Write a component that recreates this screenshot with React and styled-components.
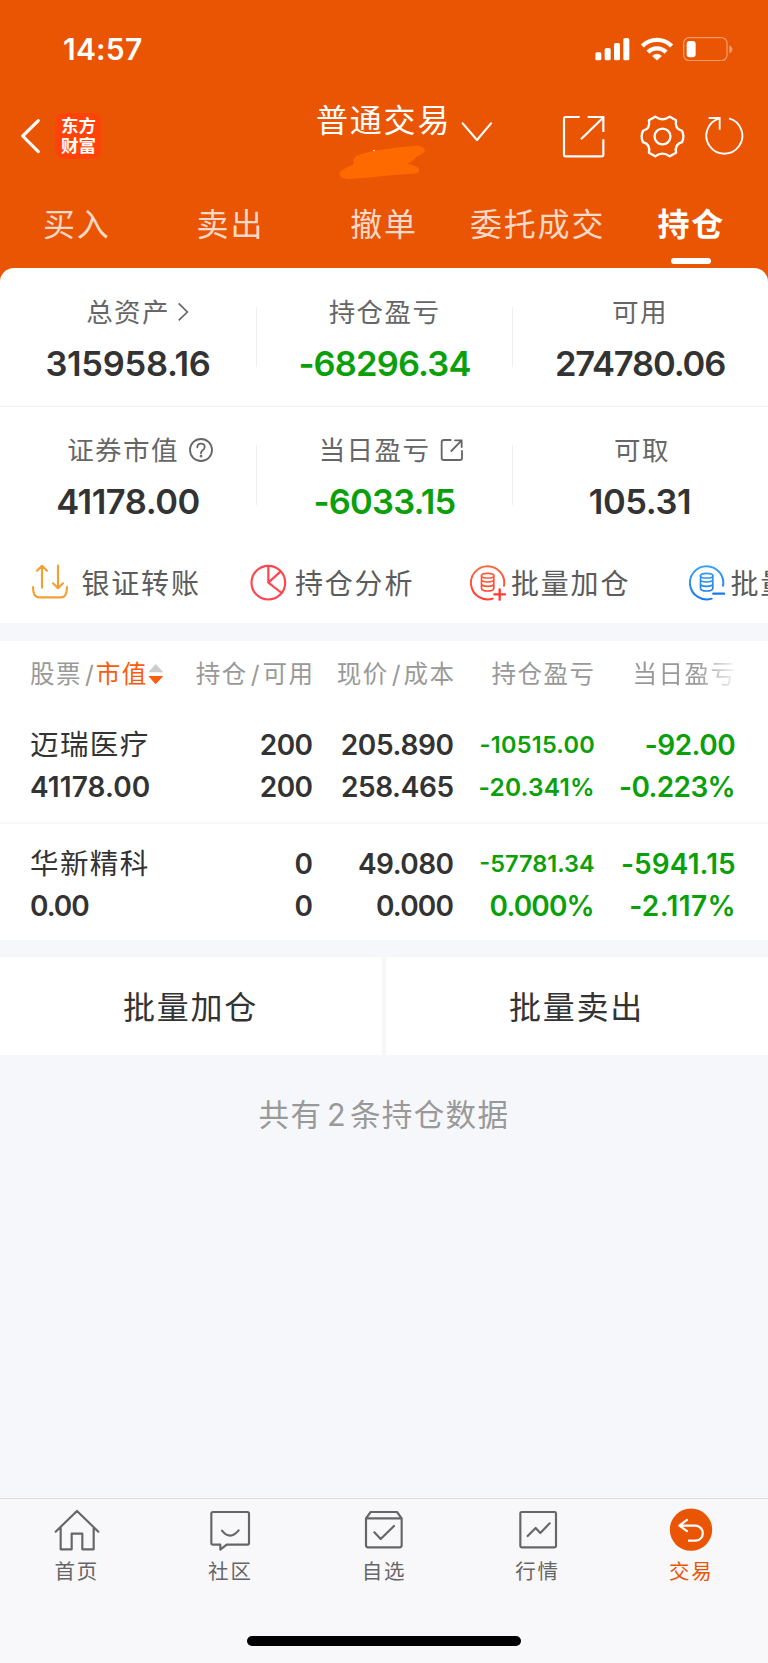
import React from "react";
import styled, { createGlobalStyle } from "styled-components";

const ORANGE = "#ea5504";
const GREEN = "#0aa00a";
const INK = "#333333";
const GREY = "#666666";
const MUTED = "#999999";
const CANVAS = "#f6f7fa";

const GlobalStyle = createGlobalStyle`
  * { box-sizing: border-box; }
  body {
    margin: 0;
    background: ${CANVAS};
    font-family: Inter, "Noto Sans CJK SC", sans-serif;
    color: ${INK};
  }
  svg { display: block; flex: none; }
`;

const Screen = styled.div`
  width: 768px;
  height: 1663px;
  display: flex;
  flex-direction: column;
  overflow: hidden;
  background: ${CANVAS};
`;

const Header = styled.header`
  height: 282px;
  flex: none;
  background: ${ORANGE};
  color: #fff;
`;

const StatusBar = styled.div`
  height: 98px;
  display: flex;
  align-items: center;
  padding: 0 35px 0 63px;
`;

const Clock = styled.span`
  flex: 1;
  font-size: 30px;
  font-weight: 600;
  line-height: 36px;
  letter-spacing: 0.2px;
`;

const StatusIcons = styled.div`
  display: flex;
  align-items: center;
  gap: 10.5px;
`;

const NavBar = styled.div`
  height: 76px;
  display: flex;
  align-items: center;
  padding: 0 23px 0 20px;
`;

const Logo = styled.div`
  width: 46px;
  height: 46px;
  margin-left: 14px;
  padding: 3px 0 0 1px;
  border-radius: 9px;
  background: #ff4208;
  font-size: 17.5px;
  font-weight: 700;
  line-height: 20px;
  text-align: center;
`;

const TitleBlock = styled.div`
  position: relative;
  margin-left: 215px;
  height: 76px;
  display: flex;
`;

const Title = styled.h1`
  margin: 0;
  font-size: 32px;
  font-weight: 400;
  line-height: 45px;
  letter-spacing: 1.8px;
  white-space: nowrap;
`;

const Scribble = styled.svg`
  position: absolute;
  left: 23px;
  top: 47px;
`;

const NavIcons = styled.div`
  display: flex;
  align-items: center;
  margin-left: auto;
`;

const Tabs = styled.nav`
  height: 94px;
  display: grid;
  grid-template-columns: repeat(5, 1fr);
`;

const Tab = styled.div`
  display: flex;
  flex-direction: column;
  align-items: center;
  padding-top: 28px;
  font-size: 32px;
  line-height: 46px;
  letter-spacing: 1.8px;
  white-space: nowrap;
  font-weight: ${(p) => (p.$active ? 700 : 400)};
  color: ${(p) => (p.$active ? "#fff" : "rgba(255,255,255,0.78)")};
  &::after {
    content: "";
    width: 40px;
    height: 6px;
    margin-top: 10px;
    border-radius: 3px;
    background: ${(p) => (p.$active ? "#fff" : "transparent")};
  }
`;

const Summary = styled.section`
  height: 355px;
  flex: none;
  margin-top: -14px;
  border-radius: 14px 14px 0 0;
  background: #fff;
  overflow: hidden;
`;

const MetricRow = styled.div`
  height: ${(p) => p.$height}px;
  display: grid;
  grid-template-columns: 257px 256px 255px;
  border-bottom: ${(p) => (p.$line ? "1px solid #f1f1f1" : "none")};
`;

const Metric = styled.div`
  display: flex;
  flex-direction: column;
  align-items: center;
  padding: 25px 1px 0 0;
  background: ${(p) =>
    p.$last ? "none" : "linear-gradient(#f0f0f0, #f0f0f0) right 39px / 1px 60px no-repeat"};
  ${MetricRow} + ${MetricRow} & {
    padding-top: 24px;
    background-position: right 38px;
  }
`;

const MetricLabel = styled.div`
  display: flex;
  align-items: center;
  gap: ${(p) => p.$gap || 0}px;
  padding-left: ${(p) => p.$shift || 0}px;
  font-size: 26.5px;
  font-weight: 400;
  line-height: 38px;
  letter-spacing: 1.4px;
  color: ${GREY};
`;

const MetricValue = styled.div`
  margin-top: ${(p) => (p.$down ? 11.5 : 12)}px;
  font-size: 34.5px;
  font-weight: 600;
  line-height: 42px;
  letter-spacing: ${(p) => p.$spacing || 0}px;
  color: ${(p) => (p.$down ? GREEN : INK)};
`;

const Actions = styled.div`
  display: flex;
  height: 78px;
  padding-left: 30.5px;
  overflow: hidden;
`;

const Action = styled.div`
  width: 219.5px;
  flex: none;
  display: flex;
  align-items: center;
  gap: ${(p) => p.$gap}px;
  font-size: 28px;
  font-weight: 400;
  letter-spacing: 1.8px;
  white-space: nowrap;
  color: #5c5c5c;
`;

const Holdings = styled.section`
  height: 299px;
  flex: none;
  margin-top: 18px;
  background: #fff;
`;

const Row = styled.div`
  display: grid;
  grid-template-columns: 142px 141px 141px 140px 141px;
  padding: 0 33px 0 30px;
`;

const HeadRow = styled(Row)`
  height: 63px;
  padding-top: 14px;
  align-items: start;
  font-size: 24.5px;
  font-weight: 400;
  line-height: 38px;
  letter-spacing: 1.5px;
  color: ${MUTED};
  white-space: nowrap;
`;

const HeadCell = styled.div`
  display: flex;
  align-items: center;
  justify-content: ${(p) => (p.$left ? "flex-start" : "flex-end")};
  margin-right: -1.5px;
  ${(p) =>
    p.$fade &&
    `-webkit-mask-image: linear-gradient(90deg, #000 72%, rgba(0,0,0,0.15) 98%);
     mask-image: linear-gradient(90deg, #000 72%, rgba(0,0,0,0.15) 98%);`}
`;

const Slash = styled.span`
  margin: 0 1.5px 0 3px;
`;

const Sorted = styled.span`
  margin-left: -1px;
  color: #ff5a0a;
`;

const StockRow = styled(Row)`
  height: ${(p) => p.$height}px;
  padding-top: ${(p) => p.$top}px;
  border-bottom: ${(p) => (p.$line ? "2px solid #f8f8f9" : "none")};
`;

const Cell = styled.div`
  display: flex;
  flex-direction: column;
  align-items: ${(p) => (p.$left ? "flex-start" : "flex-end")};
  white-space: nowrap;
`;

const Name = styled.div`
  font-size: 28.5px;
  font-weight: 400;
  line-height: 42px;
  letter-spacing: 1.4px;
`;

const Num = styled.div`
  font-size: ${(p) => p.$size || 28}px;
  font-weight: 600;
  line-height: 42px;
  letter-spacing: ${(p) => p.$spacing || 0}px;
  margin-right: ${(p) => -(p.$spacing || 0) - (p.$down ? 0.7 : 0)}px;
  color: ${(p) => (p.$down ? GREEN : INK)};
`;

const BatchBar = styled.div`
  display: flex;
  gap: 4px;
  height: 98px;
  flex: none;
  margin-top: 17px;
`;

const BatchButton = styled.button`
  flex: 1;
  border: 0;
  padding: 0 1px 3px 0;
  background: #fff;
  color: ${INK};
  font: 400 32px Inter, "Noto Sans CJK SC", sans-serif;
  letter-spacing: 1.8px;
`;

const Footnote = styled.p`
  flex: 1;
  margin: 37px 0 0;
  text-align: center;
  font-size: 30.5px;
  font-weight: 400;
  line-height: 46px;
  letter-spacing: 1.4px;
  color: ${MUTED};
`;

const Count = styled.span`
  margin: 0 3px 0 4.5px;
`;

const TabBar = styled.footer`
  height: 165px;
  flex: none;
  border-top: 1px solid #dddee0;
  background: #f8f8fb;
`;

const TabItems = styled.div`
  display: grid;
  grid-template-columns: repeat(5, 1fr);
  height: 137px;
`;

const TabItem = styled.div`
  display: flex;
  flex-direction: column;
  align-items: center;
  padding-top: 9px;
  gap: 4px;
  font-size: 20.5px;
  font-weight: 400;
  line-height: 32px;
  letter-spacing: 1.8px;
  color: ${(p) => (p.$active ? ORANGE : GREY)};
`;

const HomeIndicator = styled.div`
  width: 274px;
  height: 10px;
  margin: 0 auto;
  border-radius: 5px;
  background: #000;
`;

const Line = ({ w, h, box, sw = 6.5, color = "currentColor", children, ...rest }) => (
  <svg
    width={w}
    height={h}
    viewBox={box}
    fill="none"
    stroke={color}
    strokeWidth={sw}
    strokeLinecap="round"
    strokeLinejoin="round"
    {...rest}
  >
    {children}
  </svg>
);

const Chevron = styled(Line)`
  margin: 23px 0 0 10px;
`;

const Gear = styled(Line)`
  margin: 0 20px 0 34px;
`;

const Signal = () => (
  <svg width="35" height="24" viewBox="632 110 105 72" fill="#fff">
    <rect x="633" y="156" width="18" height="24" rx="5" />
    <rect x="661" y="143" width="18" height="37" rx="5" />
    <rect x="689" y="128" width="18" height="52" rx="5" />
    <rect x="717" y="113" width="18" height="67" rx="5" />
  </svg>
);

const Wifi = () => (
  <svg width="32" height="24" viewBox="767 109 96 72" fill="none" stroke="#fff">
    <path d="M771 136A62 62 0 0 1 859 136" strokeWidth="13" />
    <path d="M788 155A37 37 0 0 1 842 155" strokeWidth="13" />
    <path d="M815 179L801 166A20 20 0 0 1 829 166Z" fill="#fff" strokeWidth="1" />
  </svg>
);

const Battery = () => (
  <svg width="50" height="24" viewBox="895 110 150 72">
    <rect x="897" y="112" width="130" height="69" rx="17" fill="none" stroke="#fff" strokeOpacity=".4" strokeWidth="4" />
    <rect x="906" y="122" width="27" height="49" rx="9" fill="#fff" />
    <path d="M1034 135Q1043 139 1043 147Q1043 155 1034 159Z" fill="#fff" fillOpacity=".45" />
  </svg>
);

const StockTotal = ({ label, value, spacing, down, last, gap, shift, icon }) => (
  <Metric $last={last}>
    <MetricLabel $gap={gap} $shift={shift}>
      {label}
      {icon}
    </MetricLabel>
    <MetricValue $down={down} $spacing={spacing}>{value}</MetricValue>
  </Metric>
);

const ArrowRight = () => (
  <Line w={12} h={20} box="530 127 36 60" sw={5}>
    <path d="M535 131L561 157L535 182" strokeLinecap="butt" strokeLinejoin="miter" />
  </Line>
);

const Question = () => (
  <Line w={26} h={26} box="564 531 78 78" sw={5.5}>
    <circle cx="603" cy="570" r="33" />
    <path d="M592 562Q592 551 603 551Q614 551 614 561Q614 567 608 571Q603 575 603 580" />
    <circle cx="603" cy="588.5" r="1.5" fill="currentColor" />
  </Line>
);

const Popout = () => (
  <Line w={26} h={26} box="168 531 78 78" sw={5.5}>
    <path d="M203 540H183Q176 540 176 547V594Q176 600 183 600H230Q237 600 237 594V573" />
    <path d="M216 541H236V561M236 541L205 573" />
  </Line>
);

const Coins = ({ id, from, to, sign }) => (
  <svg width="37" height="37" viewBox="256 103 111 111" fill="none" stroke={`url(#${id})`} strokeWidth="6" strokeLinecap="round">
    <defs>
      <linearGradient id={id} gradientUnits="userSpaceOnUse" x1="256" y1="103" x2="256" y2="214">
        <stop offset="0" stopColor={from} />
        <stop offset="1" stopColor={to} />
      </linearGradient>
    </defs>
    <path d="M324 207A50 50 0 1 1 358 168" />
    <ellipse cx="309" cy="138" rx="18.5" ry="7" strokeWidth="5" />
    <path
      d="M290.500 138V176Q292 184 309 184T327.500 176V138M290.500 150Q292 157 309 157T327.500 150M290.500 163Q292 170 309 170T327.500 163"
      strokeWidth="5"
    />
    <path d={sign} strokeWidth="7" stroke={to} />
  </svg>
);

const stocks = [
  {
    name: "迈瑞医疗",
    value: ["41178.00", 0.1],
    held: [["200", -0.6], ["200", -0.6]],
    price: [["205.890", -0.35], ["258.465", -0.4]],
    profit: [["-10515.00", 0.25, 23.5], ["-20.341%", 0.2, 24.5]],
    today: [["-92.00", -0.5], ["-0.223%", -0.65]],
  },
  {
    name: "华新精科",
    value: ["0.00", -1],
    held: [["0", 0], ["0", 0]],
    price: [["49.080", -0.55], ["0.000", -0.8]],
    profit: [["-57781.34", 0, 23.5], ["0.000%", -0.85, 28]],
    today: [["-5941.15", 0.1], ["-2.117%", 0.4]],
  },
];

const NumCell = ({ lines, down }) => (
  <Cell>
    {lines.map(([text, spacing, size], i) => (
      <Num key={i} $down={down} $spacing={spacing} $size={size}>{text}</Num>
    ))}
  </Cell>
);

export default function App() {
  return (
    <Screen>
      <GlobalStyle />
      <Header>
        <StatusBar>
          <Clock>14:57</Clock>
          <StatusIcons>
            <Signal />
            <Wifi />
            <Battery />
          </StatusIcons>
        </StatusBar>
        <NavBar>
          <Line w={21} h={36} box="60 354 63 108" sw={9.5} color="#fff">
            <path d="M115 362L68 408L115 455" />
          </Line>
          <Logo>
            <div>东方</div>
            <div>财富</div>
          </Logo>
          <TitleBlock>
            <Title>普通交易</Title>
            <Chevron w={32} h={22} box="231 363 96 66" color="#fff">
              <path d="M236 370L279 420L321 370" />
            </Chevron>
            <Scribble width="86" height="36" viewBox="338 145 86 36" fill="#ff6a00">
              <path d="M353 164C350 158 356 155 364 153C382 149 398 147 412 146C421 145 427 149 422 153C419 156 416 156 414 158C412 161 409 162 406 164C413 165 419 167 418 171C417 174 412 174 406 174C389 175 366 178 348 179C337 179 336 172 343 169C348 166 350 166 353 164Z" />
              <circle cx="373" cy="150.500" r=".8" fill="#fff" />
            </Scribble>
          </TitleBlock>
          <NavIcons>
            <Line w={44} h={44} box="535 343 132 132" color="#fff" strokeLinecap="butt">
              <path d="M588 352H546Q541 352 541 357V465Q541 470 546 470H654Q659 470 659 465V419" />
              <path d="M612 352H659V397M658 354L592 419" strokeLinejoin="miter" />
            </Line>
            <Gear w={45} h={45} box="768 340 136 136" color="#fff" sw={7}>
              <path d="M814 348C821 353 828 356 836 356C844 356 851 353 858 348L877 359C874 375 879 387 895 391C898 397 899 402 899 408C899 414 898 419 895 425C879 429 874 441 877 457L858 468C851 463 844 460 836 460C828 460 821 463 814 468L795 457C798 441 793 429 777 425C774 419 773 414 773 408C773 402 774 397 777 391C793 387 798 375 795 359Z" />
              <circle cx="836" cy="408" r="24" />
            </Gear>
            <Line w={40} h={40} box="962 349 120 120" sw={5.5} color="#fff" strokeLinecap="butt">
              <path d="M1034 356A54 54 0 1 1 1006 356" />
              <path d="M973 355H1006V390" strokeLinejoin="miter" />
            </Line>
          </NavIcons>
        </NavBar>
        <Tabs>
          <Tab>买入</Tab>
          <Tab>卖出</Tab>
          <Tab>撤单</Tab>
          <Tab>委托成交</Tab>
          <Tab $active>持仓</Tab>
        </Tabs>
      </Header>

      <Summary>
        <MetricRow $height={139} $line>
          <StockTotal label="总资产" value="315958.16" spacing={-0.3} icon={<ArrowRight />} gap={7} shift={19} />
          <StockTotal label="持仓盈亏" value="-68296.34" spacing={-0.85} down />
          <StockTotal label="可用" value="274780.06" spacing={-1.15} last />
        </MetricRow>
        <MetricRow $height={136}>
          <StockTotal label="证券市值" value="41178.00" spacing={-0.45} icon={<Question />} gap={9} shift={25} />
          <StockTotal label="当日盈亏" value="-6033.15" spacing={-0.8} down icon={<Popout />} gap={9} shift={15} />
          <StockTotal label="可取" value="105.31" spacing={-0.4} last shift={4} />
        </MetricRow>
        <Actions>
          <Action $gap={13}>
            <Line w={38} h={38} box="90 102 114 114" color="#f2a035">
              <path d="M96 174Q96 205 115 205H180Q198 205 198 174" />
              <path d="M123 176V111M108 125L123 110L138 125M171 110V177M156 163L171 178L186 163" />
            </Line>
            银证转账
          </Action>
          <Action $gap={8}>
            <Line w={37} h={37} box="750 103 111 111" color="#ff4550">
              <circle cx="805" cy="159" r="50.500" />
              <path d="M805 109V159L842 125M805 159L845 190" />
            </Line>
            持仓分析
          </Action>
          <Action $gap={4.5}>
            <Coins id="buy" from="#ff6a45" to="#ff3b30" sign="M329 194H361M345 179V210" />
            批量加仓
          </Action>
          <Action $gap={4.5}>
            <Coins id="sell" from="#3ba4f5" to="#1a78f0" sign="M329 192H361" />
            批量卖出
          </Action>
        </Actions>
      </Summary>

      <Holdings>
        <HeadRow>
          <HeadCell $left>
            股票<Slash>/</Slash><Sorted>市值</Sorted>
            <svg width="16" height="22" viewBox="446 399 48 66">
              <path d="M447 427L469 402L492 427Z" fill="#cccccc" />
              <path d="M447 438L469 463L492 438Z" fill="#ff5a0a" />
            </svg>
          </HeadCell>
          <HeadCell>持仓<Slash>/</Slash>可用</HeadCell>
          <HeadCell>现价<Slash>/</Slash>成本</HeadCell>
          <HeadCell>持仓盈亏</HeadCell>
          <HeadCell $fade>当日盈亏</HeadCell>
        </HeadRow>
        {stocks.map((s, i) => (
          <StockRow key={s.name} $height={i ? 117 : 120} $top={i ? 19 : 20} $line={i === 0}>
            <Cell $left>
              <Name>{s.name}</Name>
              <Num $spacing={s.value[1]}>{s.value[0]}</Num>
            </Cell>
            <NumCell lines={s.held} />
            <NumCell lines={s.price} />
            <NumCell lines={s.profit} down />
            <NumCell lines={s.today} down />
          </StockRow>
        ))}
      </Holdings>

      <BatchBar>
        <BatchButton>批量加仓</BatchButton>
        <BatchButton>批量卖出</BatchButton>
      </BatchBar>
      <Footnote>共有<Count>2</Count>条持仓数据</Footnote>

      <TabBar>
        <TabItems>
          <TabItem>
            <Line w={46} h={44} box="162 84 138 132">
              <path d="M167 155L231 93L295 155M182 142V208H215V161H247V208H281V142" />
            </Line>
            首页
          </TabItem>
          <TabItem>
            <Line w={46} h={44} box="622 84 138 132">
              <path d="M640 96H743Q748 96 748 101V189Q748 194 743 194H681L662 209V194H640Q635 194 635 189V101Q635 96 640 96Z" />
              <path d="M667 152Q691 182 717 151" />
            </Line>
            社区
          </TabItem>
          <TabItem>
            <Line w={46} h={44} box="1083 84 138 132">
              <path d="M1098 115L1112 96H1191L1205 115V196Q1205 202 1199 202H1104Q1098 202 1098 196ZM1098 115H1205M1123 157L1142 177L1182 138" />
            </Line>
            自选
          </TabItem>
          <TabItem>
            <Line w={46} h={44} box="391 84 138 132">
              <rect x="407" y="96" width="107" height="106" rx="4" />
              <path d="M429 168L453 144L467 159L495 130" />
            </Line>
            行情
          </TabItem>
          <TabItem $active>
            <Line w={46} h={44} box="852 84 138 132" color="#fff">
              <circle cx="921" cy="149" r="63.500" fill={ORANGE} stroke="none" />
              <path d="M911 118L886 137L911 155M887 137H934A22 22 0 0 1 934 182H912" strokeLinecap="butt" />
            </Line>
            交易
          </TabItem>
        </TabItems>
        <HomeIndicator />
      </TabBar>
    </Screen>
  );
}
